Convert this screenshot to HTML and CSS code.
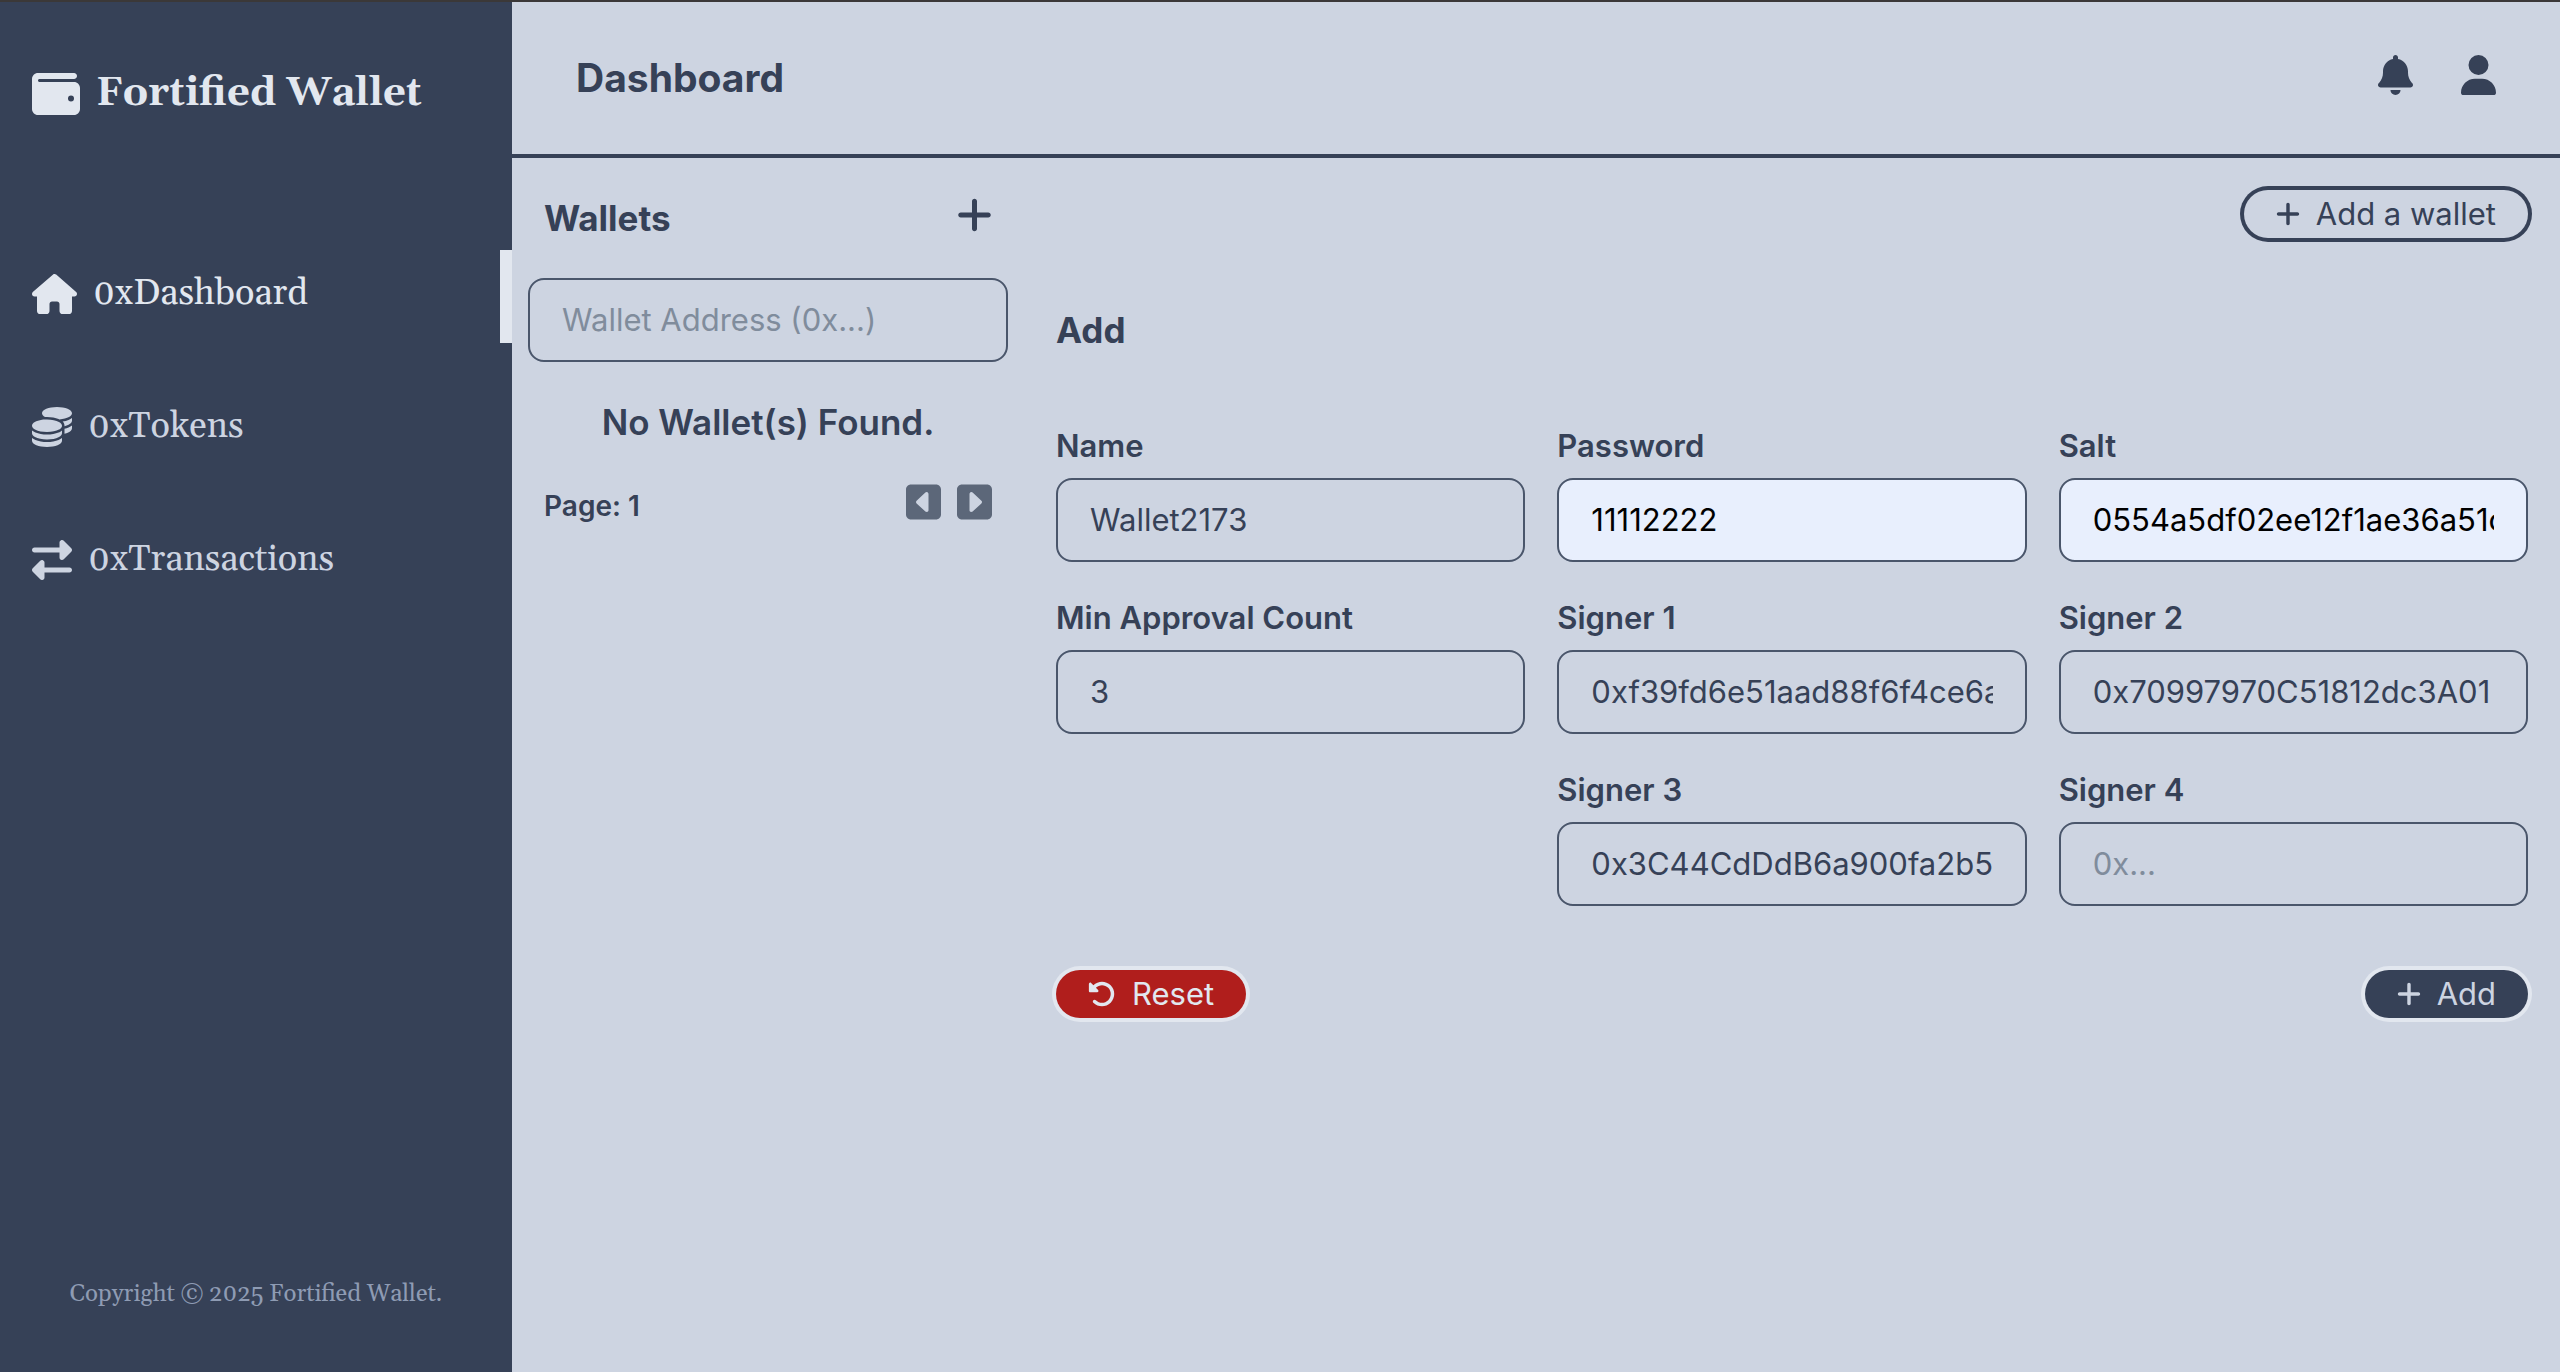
FILE: index.html
```html
<!DOCTYPE html>
<html lang="en">
<head>
<meta charset="utf-8">
<meta name="viewport" content="width=device-width, initial-scale=1">
<title>Fortified Wallet</title>
<link rel="stylesheet" href="styles.css">
</head>
<body>
<svg class="sprite" aria-hidden="true">
  <symbol id="plus" viewBox="0 0 448 512"><path d="M256 80c0-17.700-14.300-32-32-32s-32 14.300-32 32V224H48c-17.700 0-32 14.300-32 32s14.300 32 32 32H192V432c0 17.700 14.300 32 32 32s32-14.300 32-32V288H400c17.700 0 32-14.300 32-32s-14.300-32-32-32H256V80z"/></symbol>
</svg>
<div class="app">
  <aside class="sidebar">
    <div class="brand">
      <svg class="icon icon-brand" viewBox="0 0 512 512" aria-hidden="true"><path fill-rule="evenodd" d="M64 32C28.700 32 0 60.700 0 96V416c0 35.300 28.700 64 64 64H448c35.300 0 64-28.700 64-64V192c0-35.300-28.700-64-64-64H80c-8.800 0-16-7.200-16-16s7.200-16 16-16H448c17.700 0 32-14.300 32-32s-14.300-32-32-32H64zM416 272a32 32 0 1 1 0 64 32 32 0 1 1 0-64z"/></svg>
      <span class="brand-name">Fortified Wallet</span>
    </div>
    <nav class="nav">
      <a class="nav-link active" href="#dashboard">
        <svg class="icon icon-wide" viewBox="0 0 576 512" aria-hidden="true"><path d="M575.800 255.500c0 18-15 32.100-32 32.100h-32l.7 160.200c0 2.700-.2 5.400-.5 8.100V472c0 22.100-17.900 40-40 40H456c-1.100 0-2.200 0-3.300-.1c-1.400 .1-2.800 .1-4.200 .1H416 392c-22.100 0-40-17.900-40-40V448 384c0-17.700-14.300-32-32-32H256c-17.700 0-32 14.300-32 32v64 24c0 22.100-17.900 40-40 40H160 128.100c-1.500 0-3-.1-4.500-.2c-1.200 .1-2.400 .2-3.600 .2H104c-22.100 0-40-17.900-40-40V360c0-.9 0-1.900 .1-2.800V287.600H32c-18 0-32-14-32-32.100c0-9 3-17 10-24L266.400 8c7-7 15-8 22-8s15 2 21 7L564.800 231.500c8 7 12 15 11 24z"/></svg>
        <span>0xDashboard</span>
      </a>
      <a class="nav-link" href="#tokens">
        <svg class="icon icon-square" viewBox="0 0 512 512" aria-hidden="true"><path d="M512 80c0 18-14.300 34.600-38.400 48c-29.100 16.100-72.500 27.500-122.300 30.900c-3.700-1.800-7.400-3.500-11.300-5C300.600 137.400 248.200 128 192 128c-8.300 0-16.400 .2-24.500 .6l-1.100-.6C142.300 114.600 128 98 128 80c0-44.200 86-80 192-80S512 35.800 512 80zM160.700 161.100c10.200-.7 20.700-1.100 31.300-1.100c62.200 0 117.400 12.300 152.500 31.400C369.300 204.900 384 221.700 384 240c0 4-.7 7.900-2.100 11.700c-4.600 13.200-17 25.300-35 35.500c-.1 .1-.3 .1-.4 .2c-.3 .2-.6 .3-.9 .5c-35 19.400-90.800 32-153.600 32c-59.600 0-112.900-11.300-148.200-29.100c-1.900-.9-3.700-1.900-5.500-2.900C14.300 274.600 0 258 0 240c0-34.800 53.400-64.500 128-75.400c10.500-1.500 21.400-2.700 32.700-3.500zM416 240c0-21.900-10.600-39.900-24.100-53.400c28.300-4.400 54.200-11.400 76.200-20.500c16.300-6.800 31.500-15.200 43.900-25.500V176c0 19.300-16.500 37.100-43.800 50.900c-14.600 7.400-32.400 13.700-52.400 18.500c.1-1.800 .2-3.500 .2-5.300zm-32 96c0 18-14.300 34.600-38.400 48c-1.800 1-3.600 1.900-5.500 2.900C304.900 404.700 251.600 416 192 416c-62.800 0-118.600-12.600-153.600-32C14.300 370.600 0 354 0 336V300.600c12.500 10.300 27.600 18.700 43.900 25.500C83.400 342.600 135.800 352 192 352s108.600-9.400 148.100-25.900c7.800-3.200 15.300-6.900 22.400-10.900c6.100-3.400 11.800-7.200 17.200-11.200c1.500-1.100 2.900-2.300 4.300-3.400V304v5.700V336zm32 0V304 278.100c19-4.200 36.500-9.500 52.100-16c16.300-6.800 31.500-15.200 43.900-25.500V272c0 10.500-5 21-14.900 30.900c-16.300 16.300-45 29.700-81.300 38.400c.1-1.700 .2-3.500 .2-5.300zM192 448c56.200 0 108.600-9.400 148.100-25.900c16.300-6.800 31.500-15.200 43.900-25.500V432c0 44.200-86 80-192 80S0 476.200 0 432V396.600c12.500 10.300 27.600 18.700 43.900 25.500C83.400 438.600 135.800 448 192 448z"/></svg>
        <span>0xTokens</span>
      </a>
      <a class="nav-link" href="#transactions">
        <svg class="icon icon-square" viewBox="0 0 512 512" aria-hidden="true"><path d="M32 96H352V32c0-12.900 7.800-24.600 19.800-29.600s25.700-2.200 34.900 6.900l96 96c6 6 9.400 14.100 9.400 22.600s-3.400 16.600-9.400 22.600l-96 96c-9.200 9.200-22.900 11.900-34.900 6.900s-19.800-16.600-19.800-29.600V160H32c-17.700 0-32-14.300-32-32s14.300-32 32-32zM480 352c17.700 0 32 14.300 32 32s-14.300 32-32 32H160v64c0 12.900-7.800 24.600-19.800 29.600s-25.700 2.200-34.900-6.900l-96-96c-6-6-9.400-14.100-9.400-22.600s3.400-16.600 9.400-22.600l96-96c9.200-9.200 22.900-11.900 34.900-6.900s19.800 16.600 19.800 29.600v64H480z"/></svg>
        <span>0xTransactions</span>
      </a>
    </nav>
    <footer class="copyright">Copyright © 2025 Fortified Wallet.</footer>
  </aside>

  <div class="page">
    <header class="topbar">
      <h1>Dashboard</h1>
      <div class="topbar-actions">
        <button class="icon-button" type="button" aria-label="Notifications">
          <svg class="icon icon-tall" viewBox="0 0 448 512" aria-hidden="true"><path d="M224 0c-17.700 0-32 14.300-32 32V51.200C119 66 64 130.600 64 208v18.800c0 47-17.300 92.400-48.500 127.600l-7.400 8.300c-8.400 9.400-10.400 22.900-5.300 34.400S19.400 416 32 416H416c12.600 0 24-7.400 29.200-18.900s3.100-25-5.300-34.400l-7.400-8.300C401.300 319.200 384 273.900 384 226.800V208c0-77.400-55-142-128-156.800V32c0-17.700-14.300-32-32-32zm45.300 493.300c12-12 18.700-28.300 18.700-45.300H160c0 17 6.700 33.300 18.700 45.300s28.300 18.700 45.300 18.700s33.300-6.700 45.300-18.700z"/></svg>
        </button>
        <button class="icon-button" type="button" aria-label="Account">
          <svg class="icon icon-tall" viewBox="0 0 448 512" aria-hidden="true"><path d="M224 256A128 128 0 1 0 224 0a128 128 0 1 0 0 256zm-45.700 48C79.800 304 0 383.800 0 482.300C0 498.700 13.300 512 29.700 512H418.300c16.400 0 29.700-13.300 29.700-29.700C448 383.800 368.200 304 269.700 304H178.300z"/></svg>
        </button>
      </div>
    </header>

    <div class="content">
      <section class="wallets" aria-labelledby="wallets-title">
        <div class="wallets-head">
          <h2 id="wallets-title">Wallets</h2>
          <button class="icon-button" type="button" aria-label="New wallet"><svg class="icon icon-tall" aria-hidden="true"><use href="#plus"/></svg></button>
        </div>
        <input class="field-input" type="text" placeholder="Wallet Address (0x...)" aria-label="Wallet address">
        <p class="empty">No Wallet(s) Found.</p>
        <div class="pager">
          <span class="pager-label">Page: 1</span>
          <div class="pager-buttons">
            <button class="icon-button muted" type="button" aria-label="Previous page">
              <svg class="icon icon-tall" viewBox="0 0 448 512" aria-hidden="true"><path fill-rule="evenodd" d="M0 416c0 35.300 28.700 64 64 64H384c35.300 0 64-28.700 64-64V96c0-35.300-28.700-64-64-64H64C28.700 32 0 60.700 0 96V416zM128 256c0-6.700 2.800-13 7.700-17.600l112-104c7-6.500 17.200-8.200 25.900-4.400s14.400 12.500 14.400 22V360c0 9.500-5.700 18.200-14.400 22s-18.900 2.100-25.900-4.400l-112-104c-4.900-4.500-7.700-10.900-7.700-17.600z"/></svg>
            </button>
            <button class="icon-button muted" type="button" aria-label="Next page">
              <svg class="icon icon-tall" viewBox="0 0 448 512" aria-hidden="true"><path fill-rule="evenodd" d="M448 96c0-35.300-28.700-64-64-64H64C28.700 32 0 60.700 0 96V416c0 35.300 28.700 64 64 64H384c35.300 0 64-28.700 64-64V96zM320 256c0 6.700-2.800 13-7.700 17.600l-112 104c-7 6.500-17.200 8.200-25.900 4.400s-14.400-12.500-14.400-22V152c0-9.500 5.700-18.200 14.400-22s18.900-2.100 25.900 4.400l112 104c4.900 4.500 7.700 10.900 7.700 17.600z"/></svg>
            </button>
          </div>
        </div>
      </section>

      <main class="editor">
        <div class="editor-actions">
          <button class="pill pill-outline" type="button"><svg class="icon icon-small" aria-hidden="true"><use href="#plus"/></svg><span>Add a wallet</span></button>
        </div>
        <h2>Add</h2>
        <form class="form">
          <div class="fields">
            <div class="field">
              <label for="name">Name</label>
              <input class="field-input" id="name" type="text" value="Wallet2173">
            </div>
            <div class="field">
              <label for="password">Password</label>
              <input class="field-input filled" id="password" type="text" value="11112222">
            </div>
            <div class="field">
              <label for="salt">Salt</label>
              <input class="field-input filled" id="salt" type="text" value="0554a5df02ee12f1ae36a51c">
            </div>
            <div class="field">
              <label for="approvals">Min Approval Count</label>
              <input class="field-input" id="approvals" type="text" value="3">
            </div>
            <div class="field">
              <label for="signer1">Signer 1</label>
              <input class="field-input" id="signer1" type="text" value="0xf39fd6e51aad88f6f4ce6aB8827279cffFb92266">
            </div>
            <div class="field">
              <label for="signer2">Signer 2</label>
              <input class="field-input" id="signer2" type="text" value="0x70997970C51812dc3A01">
            </div>
            <div class="field second-column">
              <label for="signer3">Signer 3</label>
              <input class="field-input" id="signer3" type="text" value="0x3C44CdDdB6a900fa2b5">
            </div>
            <div class="field">
              <label for="signer4">Signer 4</label>
              <input class="field-input" id="signer4" type="text" placeholder="0x...">
            </div>
          </div>
          <div class="form-actions">
            <button class="pill pill-danger" type="button">
              <svg class="icon icon-reset" viewBox="0 0 512 512" aria-hidden="true"><path d="M48.500 224H40c-13.300 0-24-10.700-24-24V72c0-9.700 5.800-18.500 14.800-22.200s19.300-1.700 26.200 5.200L98.600 96.600c87.600-86.500 228.700-86.200 315.800 1c87.500 87.500 87.500 229.300 0 316.800s-229.300 87.500-316.800 0c-12.500-12.500-12.500-32.800 0-45.300s32.800-12.500 45.300 0c62.500 62.500 163.800 62.500 226.300 0s62.500-163.800 0-226.300c-62.200-62.200-162.700-62.500-225.300-1L185 183c6.900 6.900 8.900 17.200 5.200 26.200s-12.500 14.800-22.200 14.800H48.500z"/></svg>
              <span>Reset</span>
            </button>
            <button class="pill pill-primary" type="button"><svg class="icon icon-small" aria-hidden="true"><use href="#plus"/></svg><span>Add</span></button>
          </div>
        </form>
      </main>
    </div>
  </div>
</div>
</body>
</html>
```

FILE: styles.css
```css
:root {
  --ink: #364157;
  --line: #4a566b;
  --surface: #cdd4e1;
  --light: #e2e7ef;
  --faint: #8e9bb3;
  --placeholder: #808c9c;
  --danger: #b01e1c;
  --autofill: #e8effd;
}

* {
  box-sizing: border-box;
}

body {
  margin: 0;
  background: var(--surface);
  color: var(--ink);
  font-family: Inter, "Liberation Sans", sans-serif;
  font-size: 31px;
  line-height: 48px;
}

h1,
h2,
p {
  margin: 0;
}

button {
  font: inherit;
  color: inherit;
  cursor: pointer;
}

.sprite {
  display: none;
}

.app {
  display: grid;
  grid-template-columns: 20% minmax(0, 1fr);
  min-height: 100vh;
  border-top: 2px solid #3b3838;
}

/* Icons */

.icon {
  display: block;
  flex: none;
  fill: currentColor;
}

.icon-brand {
  width: 48px;
  height: 48px;
}

.icon-wide {
  width: 45px;
  height: 40px;
}

.icon-square {
  width: 40px;
  height: 40px;
}

.icon-tall {
  width: 35px;
  height: 40px;
}

.icon-small {
  width: 24px;
  height: 28px;
}

.icon-reset {
  width: 28px;
  height: 28px;
}

.icon-button {
  padding: 0;
  border: 0;
  background: none;
}

.muted {
  color: #5c6779;
}

/* Sidebar */

.sidebar {
  display: flex;
  flex-direction: column;
  padding: 64px 0 60px;
  background: var(--ink);
  color: var(--surface);
  font-family: Georgia, Gelasio, "DejaVu Serif", serif;
}

.brand {
  display: flex;
  align-items: center;
  gap: 16px;
  height: 56px;
  padding: 0 32px;
  color: var(--light);
  font-size: 40px;
  font-weight: 700;
  white-space: nowrap;
}

.nav {
  display: flex;
  flex-direction: column;
  gap: 40px;
  margin-top: 128px;
}

.nav-link {
  display: flex;
  align-items: center;
  gap: 16px;
  height: 93px;
  padding: 0 20px 5px 32px;
  border-right: 12px solid transparent;
  color: inherit;
  font-size: 36px;
  text-decoration: none;
}

.nav-link.active {
  border-right-color: var(--light);
  color: var(--light);
}

.copyright {
  margin-top: auto;
  color: var(--faint);
  font-size: 24px;
  line-height: 36px;
  text-align: center;
}

/* Top bar */

.topbar {
  display: flex;
  align-items: center;
  justify-content: space-between;
  height: 156px;
  padding: 0 64px;
  border-bottom: 4px solid var(--ink);
}

.topbar h1 {
  font-size: 39px;
  font-weight: 700;
}

.topbar-actions {
  display: flex;
  gap: 48px;
  padding-bottom: 6px;
}

/* Content */

.content {
  display: grid;
  grid-template-columns: 25% minmax(0, 1fr);
}

h2,
.empty {
  font-size: 35px;
  line-height: 56px;
}

h2 {
  font-weight: 700;
}

.wallets {
  display: flex;
  flex-direction: column;
  gap: 32px;
  padding: 32px 16px;
}

.wallets-head,
.pager {
  display: flex;
  align-items: flex-start;
  justify-content: space-between;
  padding: 0 16px;
}

.wallets-head .icon-button {
  padding: 5px 0;
}

.empty {
  font-weight: 600;
  text-align: center;
}

.pager-label {
  font-size: 28px;
  font-weight: 600;
}

.pager-buttons {
  display: flex;
  gap: 16px;
}

.editor {
  display: flex;
  flex-direction: column;
  gap: 64px;
  padding: 32px;
}

.editor-actions {
  display: flex;
  justify-content: flex-end;
}

.fields {
  display: grid;
  grid-template-columns: repeat(3, minmax(0, 1fr));
  gap: 32px;
}

.field {
  display: flex;
  flex-direction: column;
  gap: 8px;
}

.field label {
  font-weight: 600;
}

.second-column {
  grid-column: 2;
}

.field-input {
  width: 100%;
  height: 84px;
  padding: 15px 32px 17px;
  border: 2px solid var(--line);
  border-radius: 16px;
  outline: 0;
  background: transparent;
  color: var(--ink);
  font: inherit;
}

.field-input::placeholder {
  color: var(--placeholder);
  opacity: 1;
}

.field-input.filled {
  background: var(--autofill);
  color: #000;
}

.form-actions {
  display: flex;
  justify-content: space-between;
  margin-top: 64px;
}

/* Pill buttons carry their outline outside the box */

.pill {
  display: flex;
  align-items: center;
  gap: 16px;
  height: 48px;
  padding: 0 32px;
  border: 0;
  border-radius: 24px;
}

.pill-outline {
  background: transparent;
  box-shadow: 0 0 0 4px var(--ink);
}

.pill-danger {
  background: var(--danger);
  color: var(--light);
  box-shadow: 0 0 0 4px var(--light);
}

.pill-primary {
  background: var(--ink);
  color: var(--surface);
  box-shadow: 0 0 0 4px var(--light);
}
```
